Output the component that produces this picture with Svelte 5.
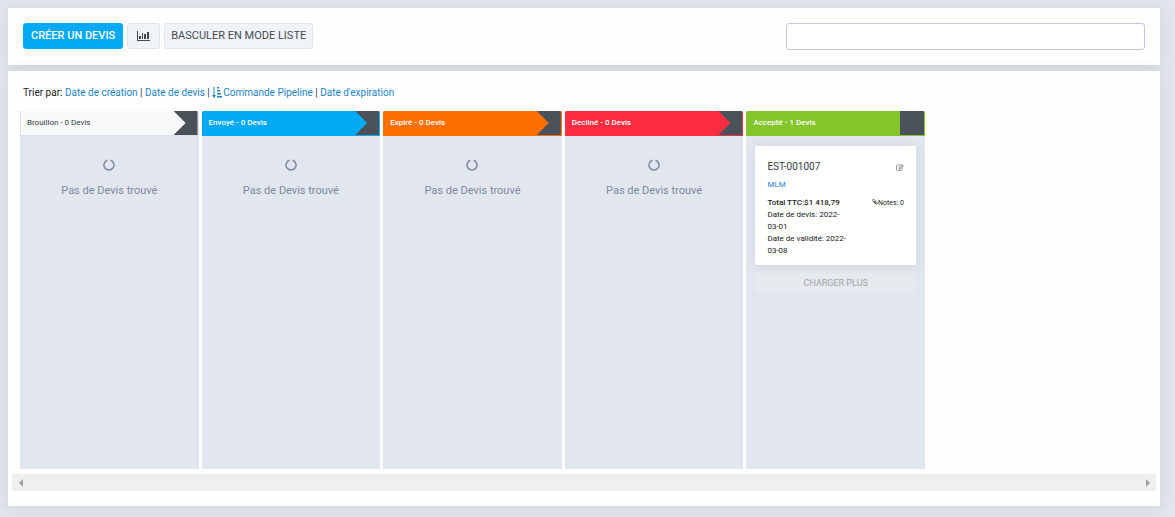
<script>
    let search = "";
    const sorts = [
        { label: "Date de création", active: false },
        { label: "Date de devis", active: false },
        { label: "Commande Pipeline", active: true },
        { label: "Date d'expiration", active: false },
    ];
    const columns = [
        { name: "Brouillon", kind: "draft", estimates: [] },
        { name: "Envoyé", kind: "sent", estimates: [] },
        { name: "Expiré", kind: "expired", estimates: [] },
        { name: "Decliné", kind: "declined", estimates: [] },
        {
            name: "Accepté",
            kind: "accepted",
            estimates: [
                {
                    number: "EST-001007",
                    client: "MLM",
                    total: "$1 418,79",
                    date: "2022-03-01",
                    expiry: "2022-03-08",
                    notes: 0,
                },
            ],
        },
    ];
</script>

<main>
    <section class="panel toolbar">
        <button class="btn primary">CRÉER UN DEVIS</button>
        <button class="btn chart" aria-label="Statistiques">
            <svg width="13" height="10" viewBox="0 0 13 10" fill="currentColor">
                <path d="M0 0h1v9h12v1H0zM2 5h2v3H2zM5 2h1v6H5zM7 3h2v5H7zM10 1h2v7h-2z" />
            </svg>
        </button>
        <button class="btn">BASCULER EN MODE LISTE</button>
        <input class="search" type="search" aria-label="Rechercher" bind:value={search} />
    </section>

    <section class="panel pipeline">
        <div class="sort">
            <span class="sort-label">Trier par:</span>
            {#each sorts as sort, index}
                {#if index > 0}<span class="divider">{" | "}</span>{/if}
                <a href="#sort">
                    {#if sort.active}
                        <svg class="sort-icon" width="10" height="11" viewBox="0 0 10 11" fill="currentColor">
                            <path d="M1.5 0h1v8H4L2 11 0 8h1.5zM5 0h2v1.5H5zM5 3h3v1.5H5zM5 6h4v1.5H5zM5 9h5v1.5H5z" />
                        </svg>
                    {/if}{sort.label}</a>
            {/each}
        </div>

        <div class="board">
            {#each columns as column}
                <div class="column">
                    <div class="heading {column.kind}">
                        <span class="title">{column.name} - {column.estimates.length} Devis</span>
                        <span class="arrow"></span>
                    </div>
                    {#each column.estimates as estimate}
                        <article class="card">
                            <div class="card-top">
                                <a class="number" href="#estimate">{estimate.number}</a>
                                <a class="edit" href="#edit" aria-label="Modifier">
                                    <svg width="8" height="7" viewBox="0 0 16 14" fill="none" stroke="currentColor" stroke-width="1.5">
                                        <path d="M10 2H3Q1 2 1 4v7q0 2 2 2h7q2 0 2-2V9" />
                                        <path d="M6 10V7l6-6 3 3-6 6z" fill="currentColor" fill-opacity="0.4" />
                                    </svg>
                                </a>
                            </div>
                            <a class="client" href="#client">{estimate.client}</a>
                            <div class="card-body">
                                <div class="dates">
                                    <p class="total">Total TTC:{estimate.total}</p>
                                    <p>Date de devis: {estimate.date}</p>
                                    <p>Date de validité: {estimate.expiry}</p>
                                </div>
                                <span class="notes">
                                    <svg width="6" height="6" viewBox="0 0 12 12" fill="none" stroke="currentColor" stroke-width="1.3">
                                        <path d="M3 5l5 5q2 1 3-1 0-1-1-2L4 1Q2 0 1 2q-1 1 1 3l5 4q2 0 1-2L4 4" />
                                    </svg>Notes: {estimate.notes}
                                </span>
                            </div>
                        </article>
                        <button class="more" disabled>CHARGER PLUS</button>
                    {:else}
                        <div class="empty">
                            <svg width="12" height="12" viewBox="0 0 12 12" fill="none" stroke="currentColor" stroke-width="1.5">
                                <path d="M7.5 1.3a5 5 0 1 1-3 0" />
                            </svg>
                            <p>Pas de Devis trouvé</p>
                        </div>
                    {/each}
                </div>
            {/each}
        </div>

        <div class="scrollbar">
            <button aria-label="Défiler à gauche">
                <svg width="4" height="8" viewBox="0 0 4 8" fill="currentColor"><path d="M4 0v8L0 4z" /></svg>
            </button>
            <button aria-label="Défiler à droite">
                <svg width="4" height="8" viewBox="0 0 4 8" fill="currentColor"><path d="M0 0v8l4-4z" /></svg>
            </button>
        </div>
    </section>
</main>

<style>
    :global(body) {
        margin: 0;
        background: #e2e6ed;
    }
    main {
        display: flex;
        flex-direction: column;
        gap: 6px;
        padding: 8px 15px 11px 8px;
        font-family: Roboto, sans-serif;
        font-size: 10px;
        color: #323a45;
    }
    p {
        margin: 0;
    }
    a {
        color: #1b84c7;
        text-decoration: none;
    }
    button,
    input {
        font-family: inherit;
        box-sizing: border-box;
    }
    .panel {
        background: #fefefe;
        box-shadow: 0 1px 15px 1px rgba(90, 100, 110, 0.12);
    }
    .toolbar {
        display: flex;
        gap: 4px;
        padding: 15px;
    }
    .btn {
        height: 26px;
        padding: 0 6px;
        border: 1px solid #e0e5ea;
        border-radius: 3px;
        background: #f0f4f8;
        color: #444a52;
        font-size: 11px;
        line-height: 22px;
        white-space: nowrap;
    }
    .btn.primary {
        padding: 0 7px;
        border-color: #03a9f4;
        background: #03a9f4;
        color: #fff;
        font-weight: 500;
    }
    .btn.chart {
        padding: 0 9px;
    }
    .btn svg {
        display: block;
    }
    .search {
        width: 359px;
        height: 27px;
        margin-left: auto;
        border: 1px solid #bfcbd9;
        border-radius: 3px;
        background: #fff;
    }
    .pipeline {
        padding: 16px 4px 15px;
    }
    .sort {
        padding: 0 11px;
        line-height: 12px;
    }
    .sort-label {
        color: #222;
    }
    .sort-icon {
        vertical-align: -2px;
        margin-right: 1px;
    }
    .board {
        display: grid;
        grid-template-columns: repeat(5, minmax(0, 1fr));
        gap: 3px;
        max-width: 905px;
        min-height: 358px;
        margin: 12px 8px 5px;
    }
    .column {
        background: #e2e6ee;
    }
    .heading {
        display: flex;
        height: 25px;
        box-sizing: border-box;
        border: 1px solid;
        border-top: 0;
        border-radius: 2px 2px 0 0;
        font-size: 8px;
        font-weight: 500;
        line-height: 23px;
        color: #fff;
        overflow: hidden;
    }
    .title {
        flex: 1;
        padding-left: 6px;
    }
    .arrow {
        width: 24px;
        background: #4b5158;
        clip-path: polygon(0 0, 100% 0, 100% 100%, 0 100%, 50% 50%);
    }
    .heading.draft {
        border-color: #dce1ef;
        background: #f7f9fa;
        color: #323a45;
        font-weight: 400;
    }
    .sent {
        border-color: #03a9f4;
        background: #03a9f4;
    }
    .expired {
        border-color: #ff6f00;
        background: #ff6f00;
    }
    .declined {
        border-color: #fc2d42;
        background: #fc2d42;
    }
    .accepted {
        border-color: #84c529;
        background: #84c529;
    }
    .accepted .arrow {
        clip-path: none;
    }
    .empty {
        padding-top: 23px;
        color: #7d8a9f;
        font-size: 11px;
        line-height: 16px;
        text-align: center;
    }
    .empty svg {
        display: block;
        margin: 0 auto 12px;
    }
    .card {
        margin: 10px 9px 8px;
        padding: 15px 12px 8px;
        background: #fff;
        box-shadow: 0 1px 10px rgba(90, 100, 110, 0.12);
        color: #222;
        font-size: 8px;
        line-height: 12px;
    }
    .card-top {
        display: flex;
        justify-content: space-between;
        align-items: center;
    }
    .number {
        color: #323a45;
        font-size: 10px;
    }
    .edit {
        display: flex;
        color: #808080;
    }
    .client {
        display: block;
        margin: 6px 0;
    }
    .card-body {
        display: flex;
        justify-content: space-between;
    }
    .dates {
        width: 82px;
    }
    .total {
        font-weight: 500;
        white-space: nowrap;
    }
    .notes {
        font-size: 7px;
    }
    .more {
        display: block;
        width: calc(100% - 18px);
        height: 20px;
        margin: 0 9px;
        padding: 0;
        border: 0;
        border-radius: 3px;
        background: #e6e9ee;
        color: #a2a6ab;
        font-size: 9px;
    }
    .scrollbar {
        display: flex;
        justify-content: space-between;
        height: 17px;
        background: #efefef;
    }
    .scrollbar button {
        width: 17px;
        padding: 0;
        border: 0;
        background: none;
        color: #a0a0a0;
    }
    .scrollbar svg {
        display: block;
        margin: 0 auto;
    }
</style>
